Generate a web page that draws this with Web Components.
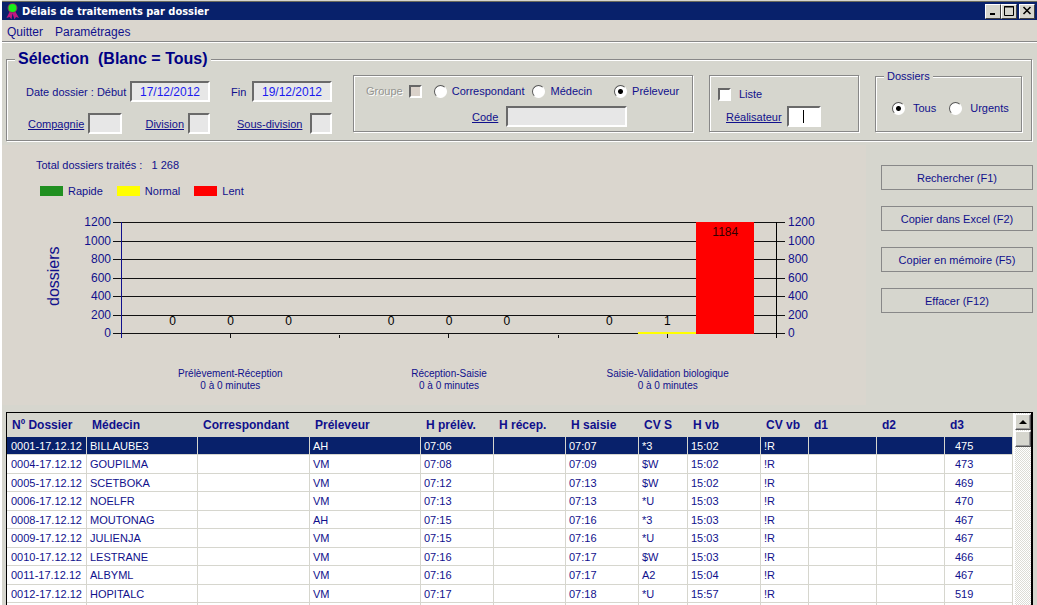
<!DOCTYPE html>
<html lang="fr">
<head>
<meta charset="utf-8">
<title>Délais de traitements par dossier</title>
<style>
  body { margin: 0; background: #fff; font: 11px/14px "Liberation Sans", Arial, sans-serif; color: #10108c; }
</style>
</head>
<body>
<app-window></app-window>
<script>
const controls = `
  * { box-sizing: border-box; }
  input, button { font: inherit; color: inherit; margin: 0; }
  input[type=text] { height: 21px; padding: 0; border: 2px solid; border-color: #6a6a6a #fff #fff #6a6a6a; border-radius: 0;
    background: #e7e7e7; color: #1a1af0; font-size: 12px; text-align: center; outline: 0; min-width: 0; }
  input[type=checkbox], input[type=radio] { appearance: none; flex: none; width: 13px; height: 13px; border: 2px solid;
    border-color: #666 #fff #fff #666; background: #fff; }
  input[type=radio] { border-radius: 50%; border-width: 1px; border-color: #555 #fff #fff #555; }
  input[type=radio]:checked { background: radial-gradient(circle, #000 0 2px, #fff 3px); }
  input:disabled { background: #dad2ca; }
  .link { text-decoration: underline; }
  .row { display: flex; align-items: center; }
`;

function define(name, css, html) {
  customElements.define(name, class extends HTMLElement {
    constructor() {
      super();
      this.attachShadow({ mode: 'open' }).innerHTML = `<style>${controls}${css}</style>${html}`;
    }
  });
}

define('title-bar', `
  :host { display: flex; align-items: center; height: 18px; padding: 0 2px 0 3px; background: #08216b; color: #fff;
    font: bold 11px/17px "DejaVu Sans Condensed", "DejaVu Sans", sans-serif; }
  .icon { width: 15px; height: 17px; margin-right: 2px; }
  h1 { flex: 1; margin: 0; font: inherit; }
  button { width: 16px; height: 15px; padding: 0; border: 1px solid; border-color: #fff #404040 #404040 #fff; background: #d6d6ce; display: flex; }
  button:last-child { margin-left: 2px; }
  button svg { display: block; margin: auto; }
`, `
  <svg class="icon" viewBox="0 0 15 17" aria-hidden="true">
    <path d="M5 8 1.500 15l3-1 2 2.500 1-6 2 6 1.500-2.500 3 1-4-7z" fill="#c01880"/>
    <circle cx="7.500" cy="5" r="5" fill="#803060"/><circle cx="7.500" cy="5" r="4" fill="#18f018"/>
  </svg>
  <h1><slot></slot></h1>
  <button aria-label="Réduire"><svg width="10" height="10"><path d="M2 8h5" stroke="#000" stroke-width="2"/></svg></button>
  <button aria-label="Agrandir"><svg width="10" height="10"><path d="M.5 9.500v-9h9v9zM0 1h10" fill="none" stroke="#000"/></svg></button>
  <button aria-label="Fermer"><svg width="10" height="10"><path d="m1.500 1 7 7m0-7-7 7" stroke="#000" stroke-width="1.600"/></svg></button>
`);

define('menu-bar', `
  :host { display: flex; gap: 12px; height: 22px; padding: 2px 5px 0; align-items: center; background: #dad6ce;
    border-bottom: 1px solid #888; box-shadow: 0 1px #fff; font-size: 12px; }
  button { border: 0; padding: 0; background: none; }
`, `<button>Quitter</button><button>Paramétrages</button>`);

define('group-box', `
  :host { display: block; min-width: 0; }
  fieldset { min-width: 0; height: 100%; margin: 0; padding: 0; border: 1px solid #888; box-shadow: 1px 1px #fff, inset 1px 1px #fff; }
  legend { margin-left: 8px; padding: 0 3px; background: #d6d6ce; white-space: pre; }
  :host([main]) legend { font: bold 16px/18px "Liberation Sans", Arial, sans-serif; color: #000084; }
  :host([plain]) legend { display: none; }
`, `<fieldset><legend><slot name="title"></slot></legend><slot></slot></fieldset>`);

define('date-filter', `
  :host { display: grid; grid-template-columns: 184px 101px; column-gap: 21px; row-gap: 11px; padding-top: 12px; align-content: start; }
  .row { justify-content: space-between; height: 21px; }
  .date { width: 80px; }
  .wide { width: 34px; }
  .small { width: 22px; }
  .start { padding-left: 2px; gap: 4px; }
  .start .wide { margin-right: auto; }
  .inset { padding-left: 6px; }
`, `
  <div class="row"><label for="debut">Date dossier : Début</label><input class="date" id="debut" type="text" value="17/12/2012"></div>
  <div class="row"><label for="fin">Fin</label><input class="date" id="fin" type="text" value="19/12/2012"></div>
  <div class="row start"><label class="link" for="comp">Compagnie</label><input class="wide" id="comp" type="text">
    <label class="link" for="div">Division</label><input class="small" id="div" type="text"></div>
  <div class="row inset"><label class="link" for="sous">Sous-division</label><input class="small" id="sous" type="text"></div>
`);

define('group-filter', `
  :host { display: block; padding: 8px 0 0 12px; }
  .row > input + label { margin-left: 5px; }
  .row > label + input { margin-left: 8px; }
  .row > .off + input { margin-left: 6px; }
  .row > input + input { margin-left: 12px; }
  .row > .last { margin-left: 22px; }
  .off { color: #949490; text-shadow: 1px 1px #fff; }
  .code { padding-left: 106px; margin-top: 8px; }
  .code > input { width: 121px; }
`, `
  <div class="row"><label class="off" for="g">Groupe</label><input id="g" type="checkbox" disabled>
    <input type="radio" name="t" id="c"><label for="c">Correspondant</label>
    <input type="radio" name="t" id="m"><label for="m">Médecin</label>
    <input class="last" type="radio" name="t" id="p" checked><label for="p">Préleveur</label></div>
  <div class="row code"><label class="link" for="code">Code</label><input id="code" type="text"></div>
`);

define('list-filter', `
  :host { display: block; padding: 11px 0 0 8px; }
  label { margin-left: 8px; }
  .second { margin-top: 5px; }
  .second input { width: 34px; margin-left: 5px; background: linear-gradient(#000, #000) center / 1px 13px no-repeat #fff; }
`, `
  <div class="row"><input type="checkbox" id="l"><label for="l">Liste</label></div>
  <div class="row second"><label class="link" for="r">Réalisateur</label><input type="text" id="r"></div>
`);

define('urgency-filter', `
  :host { display: flex; align-items: center; padding: 18px 0 0 16px; }
  label { margin: 0 13px 0 8px; }
`, `
  <input type="radio" name="u" id="all" checked><label for="all">Tous</label>
  <input type="radio" name="u" id="urg"><label for="urg">Urgents</label>
`);

define('selection-panel', `
  :host { display: block; padding: 8px 5px 0 4px; }
  .cols { display: grid; grid-template-columns: 311fr 340fr 150fr 147fr; column-gap: 16px; padding: 1px 9px 6px 19px; }
  .cols > group-box { height: 57px; }
  .cols > .titled { height: 63px; }
  .cols > .drop { margin-top: 6px; }
`, `
  <group-box main><span slot="title">Sélection  (Blanc = Tous)</span>
    <div class="cols">
      <date-filter></date-filter>
      <group-box class="drop" plain><group-filter></group-filter></group-box>
      <group-box class="drop" plain><list-filter></list-filter></group-box>
      <group-box class="titled"><span slot="title">Dossiers</span><urgency-filter></urgency-filter></group-box>
    </div>
  </group-box>
`);

const scale = [1200, 1000, 800, 600, 400, 200, 0].map(v => `<span>${v}</span>`).join('');
const groups = [['Prélèvement-Réception', 0, 0, 0], ['Réception-Saisie', 0, 0, 0], ['Saisie-Validation biologique', 0, 1, 1184]];

define('delay-chart', `
  :host { display: block; padding: 13px 45px 13px 34px; background: #dad6ce; }
  p { margin: 0; white-space: pre; }
  ul { display: flex; gap: 14px; margin: 12px 0 0 4px; padding: 0; list-style: none; }
  li { display: flex; align-items: center; gap: 5px; }
  i { width: 23px; height: 10px; }
  .g { background: #219021; } .y { background: #ff0; } .r { background: #f00; }
  .chart { display: grid; grid-template-columns: 35px 42px 1fr 36px; margin-top: 15px; font-size: 12px; }
  .unit { writing-mode: vertical-rl; transform: rotate(180deg); text-align: center; font-size: 16px; line-height: 18px; justify-self: center; padding-top: 2px; }
  .scale { display: flex; flex-direction: column; justify-content: space-between; height: 129px; line-height: 18px; text-align: right; }
  .scale.left { padding-right: 2px; }
  .scale.right { text-align: left; padding-left: 3px; }
  .plot { position: relative; height: 112px; margin-top: 9px; padding: 0 8px; }
  .lines { position: absolute; inset: 0; display: flex; flex-direction: column; justify-content: space-between; }
  .lines b { height: 1px; background: #111; }
  .groups { position: relative; display: flex; height: 116px; border-left: 1px solid #10108c; border-right: 1px solid #000; }
  .group { flex: 1; display: grid; grid-template-columns: 3fr 8fr 8fr 8fr 3fr; height: 116px; padding-bottom: 4px;
    background: linear-gradient(#111, #111) center bottom / 1px 4px no-repeat; }
  .group + .group { border-left: 1px solid; border-image: linear-gradient(transparent 112px, #111 112px) 1; }
  .bar { display: flex; flex-direction: column; justify-content: flex-end; align-items: center; color: #000; }
  .bar:first-child { grid-column: 2; }
  .bar span { padding-bottom: 6px; line-height: 14px; }
  .bar.low { border-bottom: 2px solid #ff0; }
  .bar.low span { padding-bottom: 4px; }
  .bar.full { background: #f00; justify-content: flex-start; padding-top: 3px; color: #300; }
  .cats { grid-column: 3; display: flex; padding: 26px 8px 0; font-size: 10px; line-height: 12px; text-align: center; color: #10108c; }
  .cats div { flex: 1; }
`, `
  <p>Total dossiers traités :   1 268</p>
  <ul><li><i class="g"></i>Rapide</li><li><i class="y"></i>Normal</li><li><i class="r"></i>Lent</li></ul>
  <div class="chart">
    <div class="unit">dossiers</div>
    <div class="scale left">${scale}</div>
    <div class="plot"><div class="lines">${'<b></b>'.repeat(7)}</div>
      <div class="groups">${groups.map(g => `<div class="group">${g.slice(1).map(v =>
        `<div class="bar ${v > 1000 ? 'full' : v ? 'low' : ''}"><span>${v}</span></div>`).join('')}</div>`).join('')}</div></div>
    <div class="scale right">${scale}</div>
    <div class="cats">${groups.map(g => `<div>${g[0]}<br>0 à 0 minutes</div>`).join('')}</div>
  </div>
`);

define('action-list', `
  :host { display: flex; flex-direction: column; gap: 16px; width: 171px; padding: 20px 4px 0 15px; }
  button { height: 25px; padding: 0; border: 1px solid #888; background: #d6d6ce; }
`, `<button>Rechercher (F1)</button><button>Copier dans Excel (F2)</button><button>Copier en mémoire (F5)</button><button>Effacer (F12)</button>`);

const widths = [80, 111, 112, 111, 73, 72, 73, 49, 73, 48, 68, 68, 68];
const heads = ['Nº Dossier', 'Médecin', 'Correspondant', 'Préleveur', 'H prélèv.', 'H récep.', 'H saisie', 'CV S', 'H vb', 'CV vb', 'd1', 'd2', 'd3'];
const rows = [
  ['0001', 'BILLAUBE3', 'AH', '07:06', '07:07', '*3', '15:02', 475],
  ['0004', 'GOUPILMA', 'VM', '07:08', '07:09', '$W', '15:02', 473],
  ['0005', 'SCETBOKA', 'VM', '07:12', '07:13', '$W', '15:02', 469],
  ['0006', 'NOELFR', 'VM', '07:13', '07:13', '*U', '15:03', 470],
  ['0008', 'MOUTONAG', 'AH', '07:15', '07:16', '*3', '15:03', 467],
  ['0009', 'JULIENJA', 'VM', '07:15', '07:16', '*U', '15:03', 467],
  ['0010', 'LESTRANE', 'VM', '07:16', '07:17', '$W', '15:03', 466],
  ['0011', 'ALBYML', 'VM', '07:16', '07:17', 'A2', '15:04', 467],
  ['0012', 'HOPITALC', 'VM', '07:17', '07:18', '*U', '15:57', 519],
].map(([n, med, prel, h1, h2, cv, h3, d3]) => [n + '-17.12.12', med, '', prel, h1, '', h2, cv, h3, '!R', '', '', d3]);
rows.push(Array(13).fill(''));

define('result-table', `
  :host { display: flex; flex: 1; min-height: 0; margin: 7px 4px 0; border: solid #000; border-width: 1px 2px 0 1px; background: #fff; overflow: hidden; }
  .data { flex: 1; min-width: 0; }
  table { width: 100%; table-layout: fixed; border-collapse: separate; border-spacing: 0; }
  th { height: 24px; padding: 0 0 0 5px; background: #d6d6ce; font-size: 12px; text-align: left; white-space: nowrap; }
  td { height: 18px; padding: 0 0 0 3px; border: solid #d6d6ce; border-width: 0 1px 1px 0; line-height: 14px; white-space: nowrap; }
  tr:nth-child(even) td { height: 19px; }
  td:first-child { padding-left: 4px; }
  td:last-child { padding-left: 10px; }
  tbody tr:first-child td { background: #08216b; color: #fff; }
  .scroll { display: flex; flex-direction: column; gap: 1px; width: 16px; margin-left: 3px; padding-top: 1px;
    background: repeating-conic-gradient(#fff 0 25%, #dcdcd6 0 50%) 0 0 / 2px 2px; }
  .scroll button { width: 100%; height: 16px; padding: 0; border: 1px solid; border-color: #fff #555 #555 #fff; box-shadow: inset -1px -1px #999; background: #d6d6ce; }
  .scroll svg { display: block; margin: auto; }
`, `
  <div class="data"><table>
    <colgroup>${widths.map(w => `<col style="width:${w}px">`).join('')}</colgroup>
    <thead><tr>${heads.map(h => `<th scope="col">${h}</th>`).join('')}</tr></thead>
    <tbody>${rows.map(r => `<tr>${r.map(c => `<td>${c}</td>`).join('')}</tr>`).join('')}</tbody>
  </table></div>
  <div class="scroll"><button aria-label="Défiler vers le haut"><svg width="8" height="4"><path d="m4 0 4 4H0z" fill="#000"/></svg></button><button aria-label="Curseur"></button></div>
`);

define('app-window', `
  :host { display: flex; flex-direction: column; height: 100vh; border-left: 2px solid #fff; background: #d6d6ce; }
  .edge { height: 2px; background: #6b6b5c; border-top: 1px solid #d6d6ce; }
  .main { display: flex; margin-top: 4px; }
  delay-chart { flex: 1; }
`, `
  <div class="edge"></div>
  <title-bar>Délais de traitements par dossier</title-bar>
  <menu-bar></menu-bar>
  <selection-panel></selection-panel>
  <div class="main"><delay-chart></delay-chart><action-list></action-list></div>
  <result-table></result-table>
`);
</script>
</body>
</html>
